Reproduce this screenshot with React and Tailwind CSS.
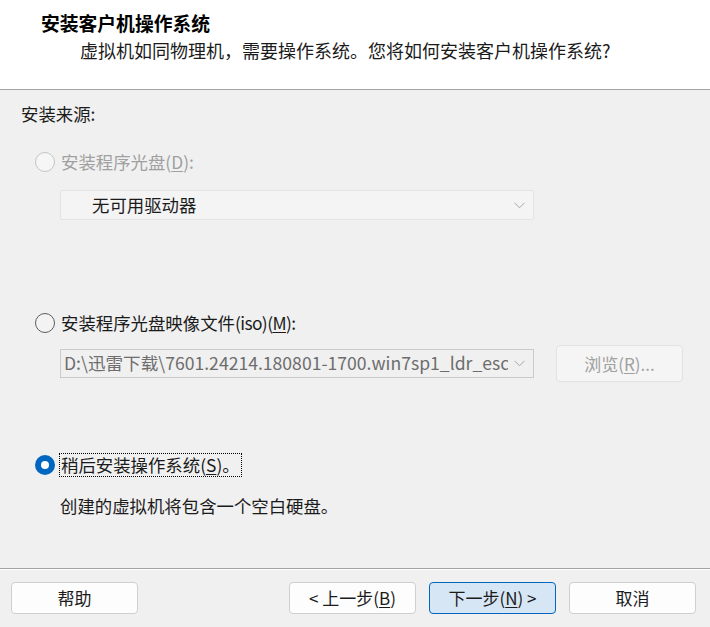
import React from "react";

const FONT = { fontFamily: '"Noto Sans CJK SC", "Noto Sans", sans-serif' };

function Chevron({ color = "#8a8a8a" }) {
  return (
    <svg width="11" height="7" viewBox="0 0 11 7" className="shrink-0">
      <path d="M0.5 0.8 L5.5 5.8 L10.5 0.8" fill="none" stroke={color} strokeWidth="1" />
    </svg>
  );
}

function Radio({ state }) {
  if (state === "checked") {
    return (
      <div className="w-[20px] h-[20px] rounded-full bg-[#0067c0] flex items-center justify-center shrink-0">
        <div className="w-[8px] h-[8px] rounded-full bg-white" />
      </div>
    );
  }
  if (state === "disabled") {
    return <div className="w-[20px] h-[20px] rounded-full border border-[#c4c4c4] bg-[#f6f6f6] shrink-0" />;
  }
  return <div className="w-[20px] h-[20px] rounded-full border border-[#5c5c5c] bg-[#f3f3f3] shrink-0" />;
}

function Btn({ children, primary }) {
  return (
    <div
      className={
        "w-[127px] h-[32px] rounded-[4px] flex items-center justify-center text-[17px] text-[#1b1b1b] " +
        (primary ? "bg-[#d6e6f4] border border-[#0067c0]" : "bg-[#fdfdfd] border border-[#cfcfcf]")
      }
    >
      {children}
    </div>
  );
}

export default function App() {
  return (
    <div className="w-[710px] h-[627px] flex flex-col bg-[#f0f0f0] overflow-hidden" style={FONT}>
      {/* header */}
      <div className="h-[90px] bg-white border-b border-[#a3a3a3] shrink-0">
        <div className="pl-[41px] pt-[9px] text-[18.8px] font-bold leading-[28px] text-black">安装客户机操作系统</div>
        <div className="pl-[80px] pt-[0px] text-[18px] leading-[26px] text-[#1a1a1a]">
          虚拟机如同物理机，需要操作系统。您将如何安装客户机操作系统?
        </div>
      </div>

      {/* body */}
      <div className="flex-1 flex flex-col text-[17.4px] text-[#1b1b1b]">
        <div className="mt-[12px] pl-[21px] leading-[24px]">安装来源:</div>

        <div className="mt-[24px] pl-[35px] flex items-center gap-[6px] h-[24px] text-[#a0a0a0]">
          <Radio state="disabled" />
          <span>
            安装程序光盘(<span className="underline underline-offset-[2px]">D</span>):
          </span>
        </div>

        <div className="mt-[16px] ml-[60px] w-[474px] h-[30px] border border-[#e3e3e3] bg-[#f4f4f4] flex items-center pl-[31px] pr-[8px] rounded-[2px]">
          <span className="flex-1 text-[#1b1b1b]">无可用驱动器</span>
          <Chevron color="#a6a6a6" />
        </div>

        <div className="mt-[91px] pl-[35px] flex items-center gap-[6px] h-[24px]">
          <Radio state="normal" />
          <span>
            安装程序光盘映像文件<span className="tracking-[-0.6px]">(iso)(<span className="underline underline-offset-[2px]">M</span>):</span>
          </span>
        </div>

        <div className="mt-[10px] ml-[60px] flex items-center h-[37px]">
          <div className="w-[474px] h-[29px] border border-[#cacaca] bg-[#f0f0f0] flex items-center pl-[3px] pr-[8px]">
            <span className="w-[444px] overflow-hidden whitespace-nowrap text-[#6d6d6d] text-[17.6px]">
              D:\迅雷下载\7601.24214.180801-1700.win7sp1_ldr_escrow.181110-1429_x64fre
            </span>
            <span className="flex-1" />
            <Chevron color="#a6a6a6" />
          </div>
          <div className="ml-[22px] w-[127px] h-[37px] border border-[#e2e2e2] bg-[#f5f5f5] rounded-[4px] flex items-center justify-center text-[#a0a0a0] text-[17px]">
            <span>
              浏览(<span className="underline underline-offset-[2px]">R</span>)...
            </span>
          </div>
        </div>

        <div className="mt-[71px] pl-[35px] flex items-center gap-[4px] h-[24px]">
          <Radio state="checked" />
          <span className="border border-dotted border-black px-[1px] h-[24px] flex items-center">
            稍后安装操作系统(<span className="underline underline-offset-[2px]">S</span>)。
          </span>
        </div>

        <div className="mt-[17px] pl-[60px] leading-[24px]">创建的虚拟机将包含一个空白硬盘。</div>
      </div>

      {/* footer */}
      <div className="h-[59px] shrink-0 border-t border-[#a3a3a3]">
        <div className="border-t border-white h-full">
          <div className="pt-[12px] flex items-center pl-[11px] pr-[14px]">
            <Btn>帮助</Btn>
            <div className="flex-1" />
            <Btn>
              &lt; 上一步(<span className="underline underline-offset-[2px]">B</span>)
            </Btn>
            <div className="w-[13px]" />
            <Btn primary>
              下一步(<span className="underline underline-offset-[2px]">N</span>) &gt;
            </Btn>
            <div className="w-[13px]" />
            <Btn>取消</Btn>
          </div>
        </div>
      </div>
    </div>
  );
}
